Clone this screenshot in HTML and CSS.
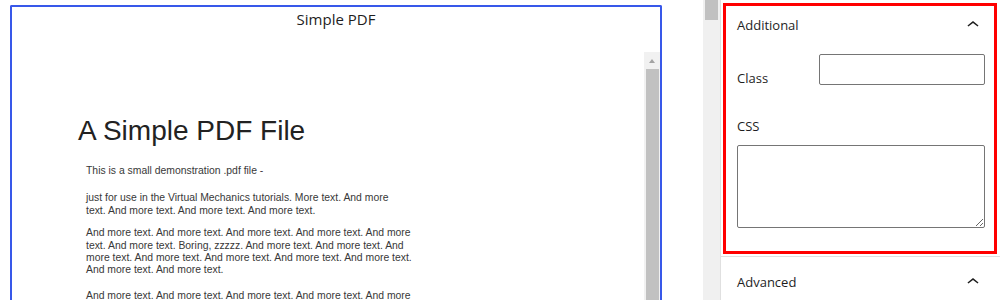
FILE: index.html
```html
<!DOCTYPE html>
<html lang="en">
<head>
<meta charset="utf-8">
<title>Simple PDF</title>
<link rel="stylesheet" href="styles.css">
</head>
<body>
<div class="app">
  <main class="editor">
    <div class="block">
      <div class="block-title">Simple PDF</div>
      <div class="viewer">
        <div class="page">
          <h1 class="pdf-title">A Simple PDF File</h1>
          <p class="pdf-p p1">This is a small demonstration .pdf file -</p>
          <p class="pdf-p p2">just for use in the Virtual Mechanics tutorials. More text. And more<br>text. And more text. And more text. And more text.</p>
          <p class="pdf-p p3">And more text. And more text. And more text. And more text. And more<br>text. And more text. Boring, zzzzz. And more text. And more text. And<br>more text. And more text. And more text. And more text. And more text.<br>And more text. And more text.</p>
          <p class="pdf-p p4">And more text. And more text. And more text. And more text. And more<br>text. And more text. And more text. And more text.</p>
        </div>
        <div class="vscroll">
          <div class="vscroll-arrow"><span class="tri"></span></div>
          <div class="vscroll-thumb"></div>
        </div>
      </div>
    </div>
  </main>
  <div class="side-scroll"><div class="side-thumb"></div></div>
  <aside class="panel">
    <section class="pbody highlighted">
      <div class="pbody-head">
        <span class="pbody-title">Additional</span>
        <svg class="chev" width="24" height="24" viewBox="0 0 24 24" aria-hidden="true"><path d="M6.5 12.4L12 8l5.5 4.4-.9 1.2L12 10l-4.6 3.6-1-1.2z"/></svg>
      </div>
      <div class="field-row">
        <label class="field-label" for="cls">Class</label>
        <input id="cls" class="field-input" type="text">
      </div>
      <label class="css-label" for="css">CSS</label>
      <textarea id="css" class="field-area"></textarea>
    </section>
    <section class="pbody">
      <div class="pbody-head">
        <span class="pbody-title">Advanced</span>
        <svg class="chev" width="24" height="24" viewBox="0 0 24 24" aria-hidden="true"><path d="M6.5 12.4L12 8l5.5 4.4-.9 1.2L12 10l-4.6 3.6-1-1.2z"/></svg>
      </div>
    </section>
  </aside>
</div>
</body>
</html>
```
FILE: styles.css
```css
html, body {
  margin: 0;
  padding: 0;
  height: 300px;
  overflow: hidden;
  background: #fff;
}

.app {
  display: flex;
  width: 1000px;
  height: 300px;
  font-family: "Open Sans", "Noto Sans", sans-serif;
  color: #1e1e1e;
}

.editor {
  width: 703px;
  flex: none;
  box-sizing: border-box;
  padding: 5px 0 0 10px;
  overflow: hidden;
}

.block {
  width: 652px;
  height: 400px;
  box-sizing: border-box;
  border: 2px solid #3858e9;
  border-bottom: none;
  border-radius: 2px 2px 0 0;
}

.block-title {
  text-align: center;
  font-size: 15px;
  line-height: 20px;
  padding-top: 2px;
  color: #1e1e1e;
}

.viewer {
  margin-top: 23px;
  display: flex;
  height: 300px;
}

.page {
  flex: 1;
  padding: 63px 0 0 66px;
  font-family: "Liberation Sans", Arial, sans-serif;
}

.pdf-title {
  margin: 0;
  font-size: 28px;
  line-height: 32px;
  font-weight: normal;
  color: #222;
}

.pdf-p {
  margin: 0 0 0 8px;
  font-size: 10.4px;
  line-height: 12.3px;
  color: #383838;
  white-space: nowrap;
}

.pdf-p.p1 { margin-top: 18px; }
.pdf-p.p2 { margin-top: 15px; }
.pdf-p.p3 { margin-top: 10.5px; }
.pdf-p.p4 { margin-top: 13.5px; }

.vscroll {
  width: 16px;
  flex: none;
  background: #f1f1f1;
  display: flex;
  flex-direction: column;
}

.vscroll-arrow {
  height: 17px;
  display: flex;
  justify-content: center;
  align-items: flex-start;
}

.tri {
  margin-top: 7px;
  width: 0;
  height: 0;
  border-left: 3.5px solid transparent;
  border-right: 3.5px solid transparent;
  border-bottom: 4px solid #a3a3a3;
}

.vscroll-thumb {
  flex: 1;
  margin: 0 1px 0 2px;
  background: #c1c1c1;
}

.side-scroll {
  width: 17px;
  flex: none;
  background: #f0f0f0;
}

.side-thumb {
  height: 20px;
  margin: 0 2px;
  background: #c1c1c1;
}

.panel {
  flex: 1;
  border-left: 1px solid #e0e0e0;
  background: #fff;
}

.pbody {
  position: relative;
  border-bottom: 1px solid #e0e0e0;
  padding: 0 15px 0 16px;
}

.pbody.highlighted {
  height: 256px;
}

.pbody.highlighted::after {
  content: "";
  position: absolute;
  left: 2px;
  top: 3px;
  right: 3px;
  bottom: 2px;
  border: 3px solid #ff0000;
  pointer-events: none;
}

.pbody-head {
  height: 50px;
  display: flex;
  align-items: center;
  justify-content: space-between;
}

.pbody-title {
  font-size: 13px;
  line-height: 18px;
  font-weight: 500;
  color: #1e1e1e;
}

.chev {
  fill: #1e1e1e;
  display: block;
}

.field-row {
  margin-top: 4px;
  display: flex;
  align-items: flex-start;
}

.field-label {
  width: 82px;
  flex: none;
  margin-top: 15px;
  font-size: 13px;
  line-height: 18px;
}

.field-input {
  width: 166px;
  height: 31px;
  box-sizing: border-box;
  margin: 0;
  border: 1px solid #757575;
  border-radius: 2px;
  background: #fff;
  font: 13px "Open Sans", sans-serif;
}

.css-label {
  display: block;
  margin-top: 30px;
  font-size: 13px;
  line-height: 18px;
}

.field-area {
  display: block;
  margin-top: 10px;
  width: 248px;
  height: 83px;
  box-sizing: border-box;
  border: 1px solid #757575;
  border-radius: 2px;
  background: #fff;
  font: 13px "Open Sans", sans-serif;
}
```
